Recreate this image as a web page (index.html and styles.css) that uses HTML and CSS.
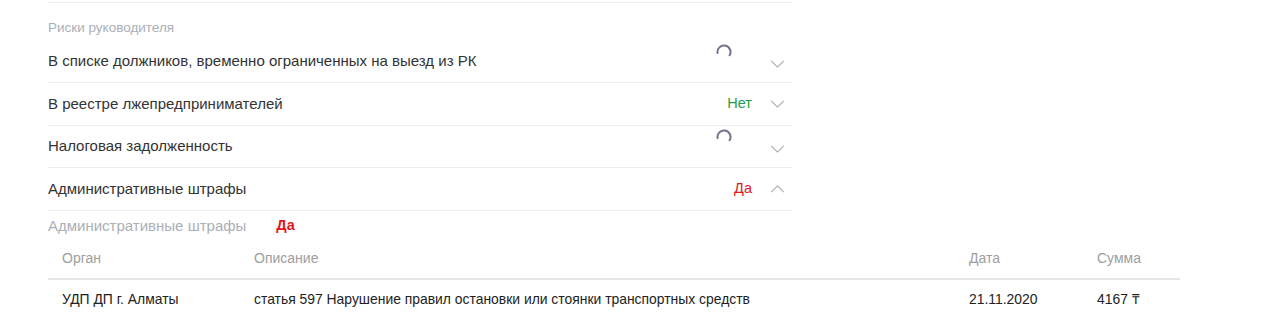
FILE: index.html
```html
<!DOCTYPE html>
<html lang="ru">
<head>
    <meta charset="UTF-8">
    <title>Риски руководителя</title>
    <link rel="stylesheet" href="styles.css">
</head>
<body>
    <div class="risks">
        <div class="risks-top"></div>
        <div class="risks-title">Риски руководителя</div>

        <div class="risk">
            <div class="risk-name">В списке должников, временно ограниченных на выезд из РК</div>
            <div class="risk-side">
                <svg class="spinner" viewBox="0 0 16 16"><path d="M1.6 9.1A6.5 6.5 0 1 1 13.6 11.25"/></svg>
                <svg class="chevron down" viewBox="0 0 16 9"><path d="M1 1l7 7 7-7"/></svg>
            </div>
        </div>
        <div class="risk">
            <div class="risk-name">В реестре лжепредпринимателей</div>
            <div class="risk-side">
                <span class="status no">Нет</span>
                <svg class="chevron" viewBox="0 0 16 9"><path d="M1 1l7 7 7-7"/></svg>
            </div>
        </div>
        <div class="risk">
            <div class="risk-name">Налоговая задолженность</div>
            <div class="risk-side">
                <svg class="spinner" viewBox="0 0 16 16"><path d="M1.6 9.1A6.5 6.5 0 1 1 13.6 11.25"/></svg>
                <svg class="chevron down" viewBox="0 0 16 9"><path d="M1 1l7 7 7-7"/></svg>
            </div>
        </div>
        <div class="risk">
            <div class="risk-name">Административные штрафы</div>
            <div class="risk-side">
                <span class="status yes">Да</span>
                <svg class="chevron" viewBox="0 0 16 9"><path d="M1 8l7-7 7 7"/></svg>
            </div>
        </div>
    </div>

    <div class="fines">
        <div class="fines-title">
            <span>Административные штрафы</span>
            <span class="status yes">Да</span>
        </div>
        <table class="fines-table">
            <thead>
                <tr>
                    <th class="c-org">Орган</th>
                    <th class="c-desc">Описание</th>
                    <th class="c-date">Дата</th>
                    <th class="c-sum">Сумма</th>
                </tr>
            </thead>
            <tbody>
                <tr>
                    <td>УДП ДП г. Алматы</td>
                    <td>статья 597 Нарушение правил остановки или стоянки транспортных средств</td>
                    <td>21.11.2020</td>
                    <td>4167 ₸</td>
                </tr>
            </tbody>
        </table>
    </div>
</body>
</html>
```

FILE: styles.css
```css
body {
    margin: 0;
    padding: 0 0 0 48px;
    font: 15px/1.2 "Liberation Sans", Arial, sans-serif;
    color: #333;
    background: #fff;
}
.risks {
    width: 744px;
}
.risks-top {
    height: 2px;
    border-bottom: 1px solid #ececec;
}
.risks-title {
    padding: 17px 0 4px;
    font-size: 13.5px;
    color: #aab0b6;
}
.risk {
    display: flex;
    align-items: center;
    justify-content: space-between;
    height: 41.7px;
    border-bottom: 1px solid #ececec;
}
.risk-side {
    display: flex;
    align-items: center;
    padding-right: 7px;
}
.status {
    font-size: 14.5px;
}
.status.no {
    color: #1f9d4c;
}
.status.yes {
    color: #e0161b;
}
.chevron {
    width: 15px;
    height: 8px;
    margin-left: 18px;
    fill: none;
    stroke: #a8a8a8;
    stroke-width: 1.2;
}
.chevron.down {
    margin-top: 6px;
}
.spinner {
    width: 16px;
    height: 16px;
    margin: -18px 20px 0 0;
    fill: none;
    stroke: #74748c;
    stroke-width: 2;
    stroke-linecap: round;
}
.fines-title {
    display: flex;
    gap: 30px;
    padding: 6px 0 0;
    color: #aab0b6;
}
.fines-title .status {
    font-weight: bold;
}
.fines-table {
    width: 1132px;
    margin-top: 15px;
    border-collapse: collapse;
}
.fines-table th {
    padding: 0 0 11px;
    font-size: 14px;
    font-weight: normal;
    text-align: left;
    color: #9e9e9e;
    border-bottom: 2px solid #e6e6e6;
}
.fines-table td {
    padding: 11px 0 0;
    color: #222;
    font-size: 13.9px;
}
.fines-table th:first-child,
.fines-table td:first-child {
    padding-left: 14px;
}
.c-org {
    width: 192px;
}
.c-desc {
    width: 715px;
}
.c-date {
    width: 128px;
}
```
